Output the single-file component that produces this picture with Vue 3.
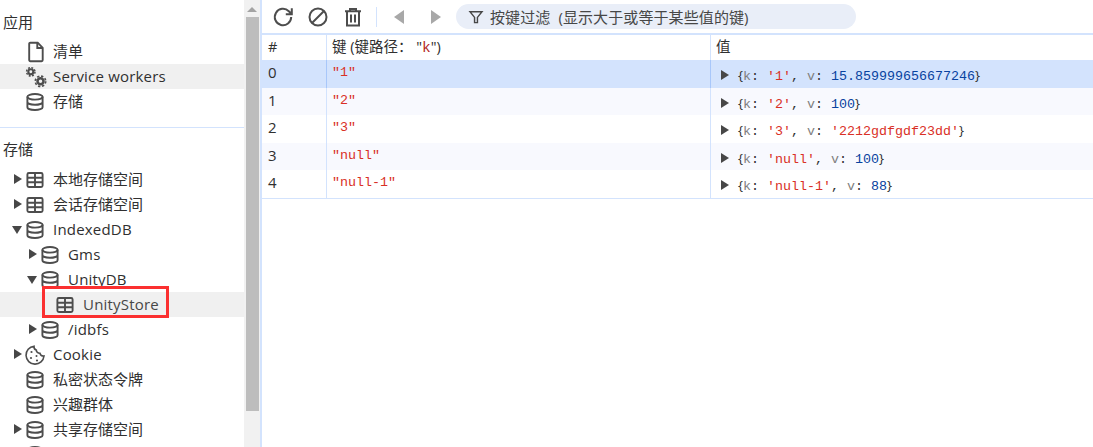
<script setup>
const nav = [
  { label: '清单', icon: 'doc', indent: 0 },
  { label: 'Service workers', icon: 'gears', indent: 0, hover: true, latin: true },
  { label: '存储', icon: 'db', indent: 0 },
]
const tree = [
  { label: '本地存储空间', icon: 'table', indent: 0, arrow: 'r' },
  { label: '会话存储空间', icon: 'table', indent: 0, arrow: 'r' },
  { label: 'IndexedDB', icon: 'db', indent: 0, arrow: 'd', latin: true },
  { label: 'Gms', icon: 'db', indent: 1, arrow: 'r', latin: true },
  { label: 'UnityDB', icon: 'db', indent: 1, arrow: 'd', latin: true },
  { label: 'UnityStore', icon: 'table', indent: 2, hover: true, marked: true, latin: true },
  { label: '/idbfs', icon: 'db', indent: 1, arrow: 'r', latin: true },
  { label: 'Cookie', icon: 'cookie', indent: 0, arrow: 'r', latin: true },
  { label: '私密状态令牌', icon: 'db', indent: 0 },
  { label: '兴趣群体', icon: 'db', indent: 0 },
  { label: '共享存储空间', icon: 'db', indent: 0, arrow: 'r' },
  { label: '', icon: 'db', indent: 0 },
]
const rows = [
  { n: 0, key: '1', k: '1', v: '15.859999656677246', t: 'num' },
  { n: 1, key: '2', k: '2', v: '100', t: 'num' },
  { n: 2, key: '3', k: '3', v: "'2212gdfgdf23dd'", t: 'str' },
  { n: 3, key: 'null', k: 'null', v: '100', t: 'num' },
  { n: 4, key: 'null-1', k: 'null-1', v: '88', t: 'num' },
]
</script>

<template>
  <div class="app">
    <aside class="side">
      <div class="panel">
        <div class="head first">应用</div>
        <div v-for="i in nav" :key="i.label" class="item" :class="{ hover: i.hover }">
          <span class="arrow"></span>
          <svg class="ico" viewBox="0 0 24 24">
            <g v-if="i.icon === 'doc'" fill="none" stroke="#4d4d4d" stroke-width="1.9">
              <path d="M7.300 2.700h7.400l5 5.100v12.300a1.100 1.100 0 0 1-1.100 1.100H7.300a1.100 1.100 0 0 1-1.100-1.100V3.800a1.100 1.100 0 0 1 1.100-1.100z"/>
              <path d="M14.300 3v5h5"/>
            </g>
            <g v-else-if="i.icon === 'gears'" fill="none" stroke="#4d4d4d">
              <circle cx="7.800" cy="6.800" r="2.500" stroke-width="2.100"/>
              <circle cx="7.800" cy="6.800" r="4.200" stroke-width="1.500" stroke-dasharray="1.900 1.400"/>
              <circle cx="17.500" cy="16.300" r="3" stroke-width="2.500"/>
              <circle cx="17.500" cy="16.300" r="5.200" stroke-width="1.700" stroke-dasharray="2.300 1.780"/>
            </g>
            <g v-else fill="none" stroke="#4d4d4d" stroke-width="1.900">
              <ellipse cx="12" cy="6.800" rx="7.600" ry="2.800"/>
              <path d="M4.400 6.800v10.400c0 1.600 3.400 2.800 7.600 2.800s7.600-1.200 7.600-2.800V6.800M4.400 12c0 1.600 3.400 2.800 7.600 2.800s7.600-1.200 7.600-2.800"/>
            </g>
          </svg>
          <span class="label" :class="{ lat: i.latin }">{{ i.label }}</span>
        </div>
      </div>
      <div class="panel second">
        <div class="head h2">存储</div>
        <div v-for="(i, idx) in tree" :key="idx" class="item" :class="[{ hover: i.hover, marked: i.marked }, 'lvl' + i.indent]">
          <span class="arrow" :class="i.arrow"></span>
          <svg class="ico" viewBox="0 0 24 24">
            <g v-if="i.icon === 'table'" fill="none" stroke="#4d4d4d" stroke-width="1.900">
              <rect x="4.400" y="5" width="15.200" height="14" rx="1.500"/>
              <path d="M4.400 9.700h15.200M4.400 14.300h15.200M12 5v14"/>
            </g>
            <g v-else-if="i.icon === 'cookie'" fill="none" stroke="#4d4d4d" stroke-width="1.600">
              <path d="M11 3.200a9 9 0 1 0 10 9.800c-2.200.2-3.600-.9-4-2.700-2 .1-3.700-1.300-3.700-3.200C11.800 6.800 10.800 5.200 11 3.200z"/>
              <circle cx="8.500" cy="9" r="1.100" fill="#4d4d4d" stroke="none"/>
              <circle cx="8" cy="15" r="1.100" fill="#4d4d4d" stroke="none"/>
              <circle cx="13.500" cy="13" r="1" fill="#4d4d4d" stroke="none"/>
              <circle cx="14" cy="17.500" r="1.100" fill="#4d4d4d" stroke="none"/>
            </g>
            <g v-else fill="none" stroke="#4d4d4d" stroke-width="1.900">
              <ellipse cx="12" cy="6.800" rx="7.600" ry="2.800"/>
              <path d="M4.400 6.800v10.400c0 1.600 3.400 2.800 7.600 2.800s7.600-1.200 7.600-2.800V6.800M4.400 12c0 1.600 3.400 2.800 7.600 2.800s7.600-1.200 7.600-2.800"/>
            </g>
          </svg>
          <span v-if="i.label" class="label" :class="{ lat: i.latin }">{{ i.label }}</span>
        </div>
      </div>
    </aside>
    <div class="scrollbar">
      <span class="up"></span>
      <span class="thumb"></span>
    </div>
    <main class="main">
      <div class="toolbar">
        <button class="tool">
          <svg viewBox="0 0 24 24"><path d="M20.200 12a8.200 8.200 0 1 1-2.400-5.800L20.700 9M20.800 3.300v6h-6" fill="none" stroke="#4d4d4d" stroke-width="2"/></svg>
        </button>
        <button class="tool">
          <svg viewBox="0 0 24 24"><circle cx="12" cy="12" r="8.500" fill="none" stroke="#4d4d4d" stroke-width="2"/><path d="M6 18L18 6" stroke="#4d4d4d" stroke-width="2"/></svg>
        </button>
        <button class="tool">
          <svg viewBox="0 0 24 24"><path d="M4 6.200h16M9 6.200V4h6v2.200M6 6.200h12v14.300H6zM10 9.500v8M14 9.500v8" fill="none" stroke="#4d4d4d" stroke-width="2"/></svg>
        </button>
        <span class="sep"></span>
        <span class="tri left"></span>
        <span class="tri right"></span>
        <div class="filter">
          <svg viewBox="0 0 20 20"><path d="M2.500 3.500h15l-5.700 7v6.500H8.200v-6.500z" fill="none" stroke="#474747" stroke-width="1.800"/></svg>
          <span class="ftext">按键过滤 (显示大于或等于某些值的键)</span>
        </div>
      </div>
      <div class="table">
        <div class="tr th">
          <div class="c1">#</div>
          <div class="c2">键 (键路径： <span class="q">"</span><span class="kp">k</span><span class="q">"</span>)</div>
          <div class="c3">值</div>
        </div>
        <div v-for="r in rows" :key="r.n" class="tr" :class="{ sel: r.n === 0, odd: r.n % 2 === 1 }">
          <div class="c1">{{ r.n }}</div>
          <div class="c2 mono red">"{{ r.key }}"</div>
          <div class="c3 mono val">
            <span class="obj-arrow"></span>
            <span><span class="br">{</span><span class="gr">k</span>: <span class="red">'{{ r.k }}'</span>, <span class="gr">v</span>: <span :class="r.t === 'num' ? 'blue' : 'red'">{{ r.v }}</span><span class="br">}</span></span>
          </div>
        </div>
      </div>
    </main>
  </div>
</template>

<style>
html, body { margin: 0; background: #fff; overflow: hidden; }
</style>

<style scoped>
.app {
  display: flex;
  width: 1093px;
  height: 447px;
  overflow: hidden;
  font-family: "Open Sans", "Noto Sans CJK SC", sans-serif;
  font-size: 15px;
  color: #303030;
}
.side { width: 244px; flex: none; overflow: hidden; }
.panel { padding-top: 10px; }
.second { border-top: 1px solid #d3e3fd; margin-top: 13px; padding-top: 9px; }
.head { height: 29px; line-height: 25px; padding-left: 3px; }
.h2 { height: 30px; }
.item { display: flex; align-items: center; height: 25px; position: relative; }
.hover { background: #f0f0f0; }
.arrow { width: 12px; margin-left: 12px; flex: none; height: 12px; position: relative; }
.arrow.r::after { content: ""; position: absolute; left: 2px; top: 0; border-left: 8px solid #474747; border-top: 5px solid transparent; border-bottom: 5px solid transparent; }
.arrow.d::after { content: ""; position: absolute; left: 0; top: 2px; border-top: 8px solid #474747; border-left: 5px solid transparent; border-right: 5px solid transparent; }
.lvl1 .arrow { margin-left: 27px; }
.lvl2 .arrow { margin-left: 42px; }
.ico { width: 24px; height: 24px; flex: none; margin-left: -1px; }
.label { margin-left: 6px; white-space: nowrap; padding-bottom: 2px; }
.lat { letter-spacing: .2px; }
.lvl2 .label { color: #474747; }
.marked::after { content: ""; position: absolute; left: 42px; top: -6px; width: 121px; height: 26px; border: 3px solid #fb3030; }
.scrollbar { width: 16px; flex: none; background: #f1f1f1; display: flex; flex-direction: column; align-items: center; }
.up { margin-top: 7px; border-bottom: 5px solid #a3a3a3; border-left: 5px solid transparent; border-right: 5px solid transparent; }
.thumb { width: 13px; height: 394px; background: #bdbdbd; margin-top: 5px; }
.main { flex: 1; min-width: 0; border-left: 2px solid #d3e3fd; }
.toolbar { height: 33px; display: flex; align-items: center; padding-left: 9px; border-bottom: 2px solid #d3e3fd; }
.tool { width: 24px; height: 24px; padding: 0; margin-right: 11px; border: 0; background: none; flex: none; }
.tool svg { width: 24px; height: 24px; display: block; }
.sep { width: 1px; height: 20px; background: #d3e3fd; margin-right: 17px; }
.tri { width: 0; height: 0; border-top: 7px solid transparent; border-bottom: 7px solid transparent; }
.tri.left { border-right: 10px solid #a8a8a8; margin-right: 27px; }
.tri.right { border-left: 10px solid #a8a8a8; margin-right: 15px; }
.filter { width: 400px; height: 25px; border-radius: 13px; background: #e9eef8; display: flex; align-items: center; box-sizing: border-box; padding-left: 12px; gap: 6px; font-size: 15px; color: #474747; white-space: nowrap; flex: none; }
.filter svg { width: 16px; height: 16px; flex: none; }
.ftext { word-spacing: 4px; letter-spacing: .1px; }
.table { border-bottom: 1px solid #d3e3fd; }
.tr { display: grid; grid-template-columns: 64px 384px 1fr; height: 27.500px; align-items: stretch; font-size: 15px; }
.tr > div { padding-left: 6px; line-height: 25px; white-space: nowrap; overflow: hidden; }
.tr > div + div { border-left: 1px solid #d3e3fd; padding-left: 5px; }
.th { height: 25px; font-size: 14.500px; }
.tr.th > div { line-height: 24px; }
.sel { background: #d3e3fd; }
.sel > div + div { border-left-color: #a8c7fa; }
.odd { background: #f8f9fe; }
.tr > .mono { font-family: "Liberation Mono", "Noto Sans CJK SC", monospace; font-size: 13.330px; }
.red { color: #d93025; }
.blue { color: #0842a0; }
.gr { color: #7f7f7f; }
.br { font-family: "Open Sans", sans-serif; }
.kp { font-family: "Liberation Mono", monospace; color: #b3261e; }
.q { color: #303030; }
.val { display: flex; align-items: flex-start; }
.tr > .val { padding-left: 10px; line-height: 31px; }
.obj-arrow { margin-top: 10px; margin-right: 9px; width: 0; height: 0; border-left: 8px solid #474747; border-top: 5px solid transparent; border-bottom: 5px solid transparent; flex: none; }
</style>
